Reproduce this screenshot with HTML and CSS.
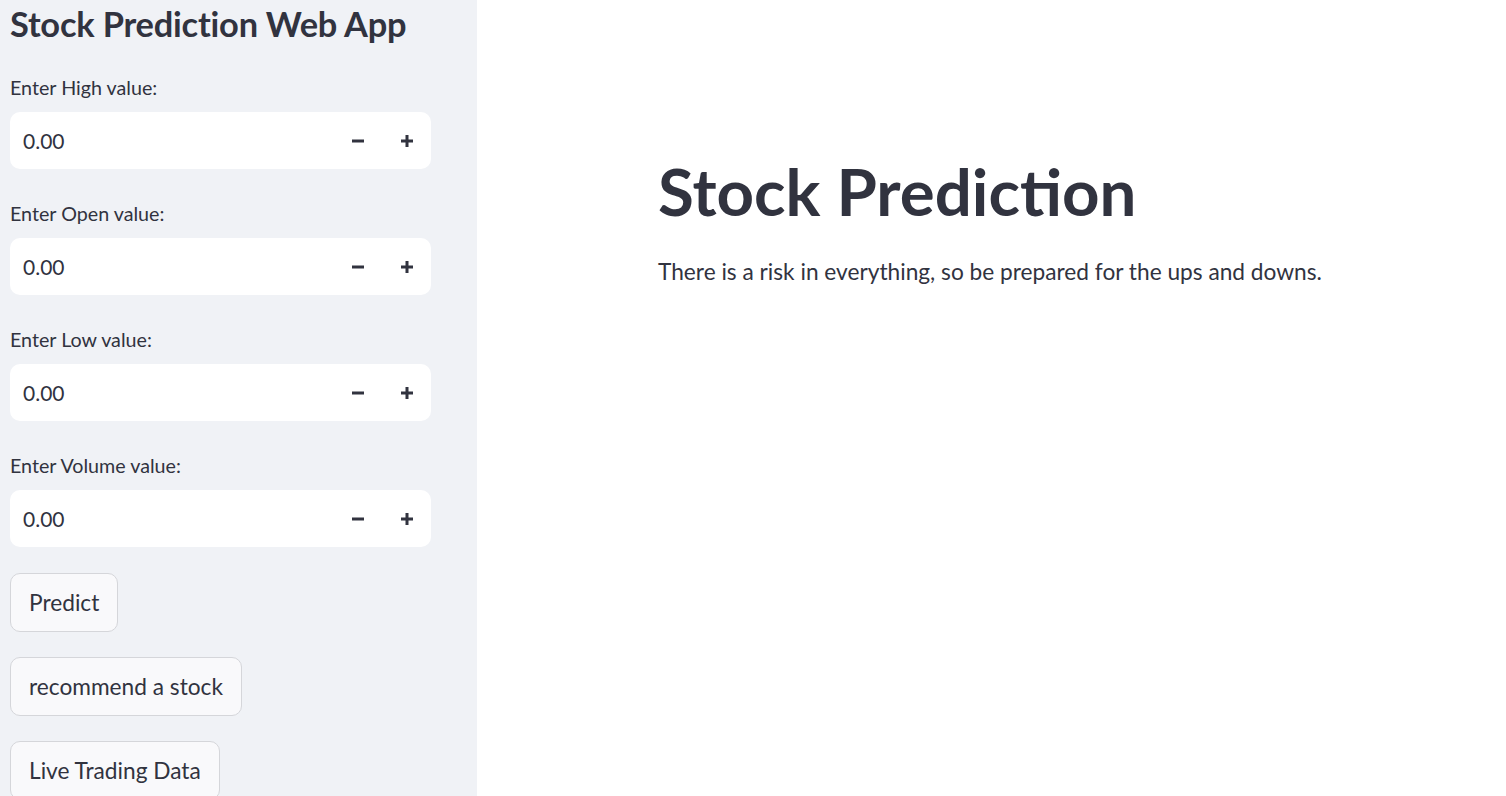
FILE: index.html
```html
<!DOCTYPE html>
<html>
<head>
<meta charset="utf-8">
<link rel="stylesheet" href="styles.css">
</head>
<body>
<div class="app">
  <aside class="sidebar">
    <h2 class="side-title">Stock Prediction Web App</h2>
    <div class="field">
      <label class="label">Enter High value:</label>
      <div class="num-input">
        <span class="num-value">0.00</span>
        <span class="step"><svg width="14" height="14" viewBox="0 0 14 14"><rect x="1" y="5.5" width="12" height="3" fill="#31333f"/></svg></span>
        <span class="step"><svg width="14" height="14" viewBox="0 0 14 14"><rect x="1" y="5.5" width="12" height="3" fill="#31333f"/><rect x="5.5" y="1" width="3" height="12" fill="#31333f"/></svg></span>
      </div>
    </div>
    <div class="field">
      <label class="label">Enter Open value:</label>
      <div class="num-input">
        <span class="num-value">0.00</span>
        <span class="step"><svg width="14" height="14" viewBox="0 0 14 14"><rect x="1" y="5.5" width="12" height="3" fill="#31333f"/></svg></span>
        <span class="step"><svg width="14" height="14" viewBox="0 0 14 14"><rect x="1" y="5.5" width="12" height="3" fill="#31333f"/><rect x="5.5" y="1" width="3" height="12" fill="#31333f"/></svg></span>
      </div>
    </div>
    <div class="field">
      <label class="label">Enter Low value:</label>
      <div class="num-input">
        <span class="num-value">0.00</span>
        <span class="step"><svg width="14" height="14" viewBox="0 0 14 14"><rect x="1" y="5.5" width="12" height="3" fill="#31333f"/></svg></span>
        <span class="step"><svg width="14" height="14" viewBox="0 0 14 14"><rect x="1" y="5.5" width="12" height="3" fill="#31333f"/><rect x="5.5" y="1" width="3" height="12" fill="#31333f"/></svg></span>
      </div>
    </div>
    <div class="field">
      <label class="label">Enter Volume value:</label>
      <div class="num-input">
        <span class="num-value">0.00</span>
        <span class="step"><svg width="14" height="14" viewBox="0 0 14 14"><rect x="1" y="5.5" width="12" height="3" fill="#31333f"/></svg></span>
        <span class="step"><svg width="14" height="14" viewBox="0 0 14 14"><rect x="1" y="5.5" width="12" height="3" fill="#31333f"/><rect x="5.5" y="1" width="3" height="12" fill="#31333f"/></svg></span>
      </div>
    </div>
    <div class="buttons">
      <button class="btn">Predict</button>
      <button class="btn">recommend a stock</button>
      <button class="btn">Live Trading Data</button>
    </div>
  </aside>
  <main class="main">
    <h1 class="title">Stock Prediction</h1>
    <p class="lead">There is a risk in everything, so be prepared for the ups and downs.</p>
  </main>
</div>
</body>
</html>
```
FILE: styles.css
```css
* { box-sizing: border-box; }
html, body { margin: 0; padding: 0; }
body {
  font-family: "Lato", "Noto Sans", sans-serif;
  color: #31333f;
  background: #ffffff;
  overflow: hidden;
}
.app {
  display: flex;
  height: 796px;
}
.sidebar {
  width: 477px;
  flex: none;
  background: #f0f2f6;
  padding: 0 46px 0 10px;
  display: flex;
  flex-direction: column;
}
.side-title {
  margin: 0;
  font-size: 34.4px;
  font-weight: 700;
  line-height: 48px;
  letter-spacing: -0.2px;
}
.field {
  display: flex;
  flex-direction: column;
  margin-top: 26px;
}
.field + .field { margin-top: 31px; }
.label {
  font-size: 19.7px;
  line-height: 28px;
  margin-bottom: 10px;
}
.num-input {
  height: 57px;
  background: #ffffff;
  border-radius: 10px;
  display: flex;
  align-items: center;
  padding-left: 13px;
  padding-right: 0;
}
.num-value {
  flex: 1;
  font-size: 21px;
}
.step {
  width: 49px;
  display: flex;
  justify-content: center;
  align-items: center;
}
.buttons {
  display: flex;
  flex-direction: column;
  align-items: flex-start;
  gap: 25px;
  margin-top: 26px;
}
.btn {
  height: 59px;
  padding: 0 18px;
  font-family: inherit;
  font-size: 22.7px;
  color: #31333f;
  background: #f9f9fb;
  border: 1px solid #d5d6da;
  border-radius: 10px;
}
.main {
  flex: 1;
  padding-left: 181px;
  padding-top: 153px;
}
.title {
  margin: 0;
  font-size: 65.4px;
  font-weight: 700;
  line-height: 76px;
}
.lead {
  margin: 25px 0 0;
  font-size: 22.7px;
  line-height: 36px;
}
```
